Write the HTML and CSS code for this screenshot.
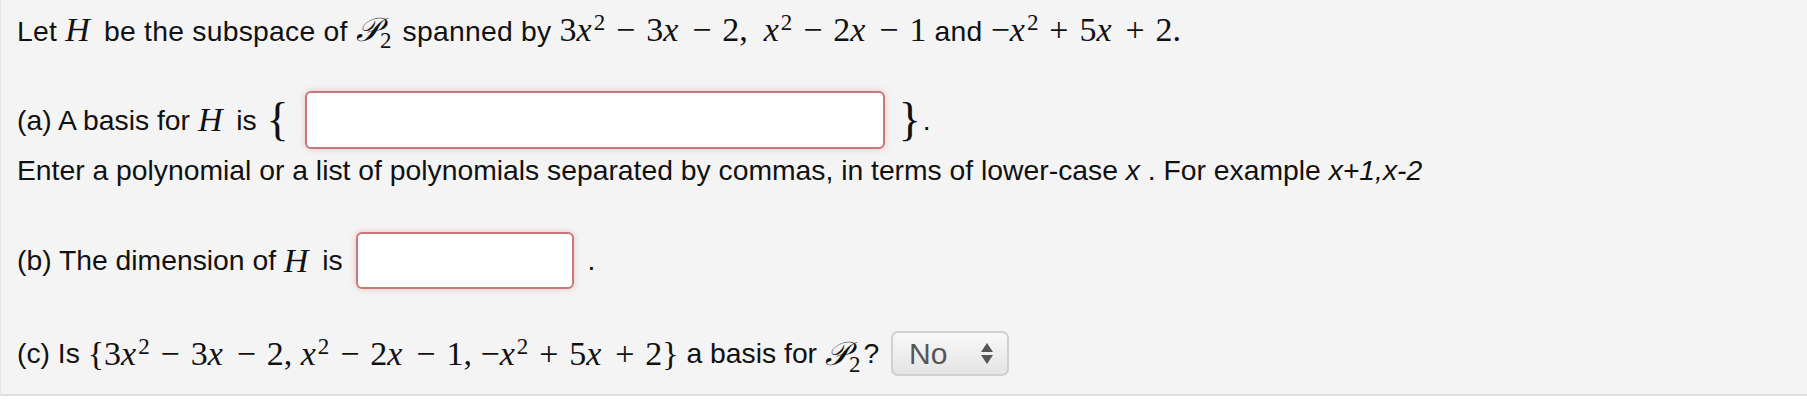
FILE: index.html
```html
<!DOCTYPE html>
<html>
<head>
<meta charset="utf-8">
<link rel="stylesheet" href="styles.css">
</head>
<body>
<div class="problem">
  <p class="line l1">Let <span class="m"><i class="mh">H</i></span> be the subspace of <span class="m"><span class="cal">𝒫</span><sub>2</sub></span> spanned by <span class="m">3<i>x</i><sup>2</sup><span class="op">−</span>3<i>x</i><span class="op">−</span>2,<span class="sp"></span><i>x</i><sup>2</sup><span class="op">−</span>2<i>x</i><span class="op">−</span>1</span> and <span class="m">−<i>x</i><sup>2</sup><span class="op">+</span>5<i>x</i><span class="op">+</span>2.</span></p>
  <div class="line la">(a) A basis for <span class="m"><i class="mh">H</i></span> is <span class="brace">{</span><span class="ans ans-a"></span><span class="brace rb">}</span><span class="dot">.</span></div>
  <p class="line lhint">Enter a polynomial or a list of polynomials separated by commas, in terms of lower-case <i>x</i> . For example <i>x+1,x-2</i></p>
  <div class="line lb">(b) The dimension of <span class="m"><i class="mh">H</i></span> is <span class="ans ans-b"></span> .</div>
  <div class="line lc">(c) Is <span class="m">{3<i>x</i><sup>2</sup><span class="op">−</span>3<i>x</i><span class="op">−</span>2, <i>x</i><sup>2</sup><span class="op">−</span>2<i>x</i><span class="op">−</span>1, −<i>x</i><sup>2</sup><span class="op">+</span>5<i>x</i><span class="op">+</span>2}</span> a basis for <span class="m"><span class="cal">𝒫</span><sub>2</sub></span>? <span class="sel">No<span class="arrows"><span class="up"></span><span class="dn"></span></span></span></div>
</div>
</body>
</html>
```
FILE: styles.css
```css
html, body {
  margin: 0;
  padding: 0;
  background: #ffffff;
}
.problem {
  background: #f4f4f4;
  border-left: 1px solid #e4e4e4;
  border-bottom: 2px solid #e0e0e0;
  height: 396px;
  box-sizing: border-box;
  padding: 0 0 0 16px;
  font-family: "Liberation Sans", Arial, sans-serif;
  font-size: 28.3px;
  color: #111;
}
.line {
  margin: 0;
  white-space: nowrap;
}
.l1 {
  padding-top: 12px;
  line-height: 36px;
  height: 36px;
  letter-spacing: 0.26px;
}
.la {
  margin-top: 43px;
  height: 58px;
  display: flex;
  align-items: center;
  white-space: pre;
}
.la .brace { margin-left: 2px; }
.la .ans-a { margin: 0 12px 0 16px; }
.dot { margin-left: 2px; }
.lhint {
  line-height: 34px;
  height: 34px;
  margin-top: 4px;
}
.lb {
  margin-top: 45px;
  display: flex;
  align-items: center;
  height: 57px;
  white-space: pre;
}
.lb .ans-b { margin: 0 6px 0 5px; }
.lc {
  margin-top: 42px;
  display: flex;
  align-items: center;
  height: 45px;
  white-space: pre;
}
.lc .sel { margin-left: 4px; }
.m {
  font-family: "Liberation Serif", "Times New Roman", serif;
  font-size: 34px;
  letter-spacing: 0;
}
.m i { font-style: italic; padding-right: 3px; }
.m i.mh { font-size: 34px; padding-right: 6px; }
.cal { font-family: "DejaVu Serif", "Liberation Serif", serif; font-style: italic; font-size: 33px; }
.m sub, .m sup { font-size: 23px; line-height: 0; }
.m sub { vertical-align: -7px; margin-right: 3px; }
.m sup { vertical-align: 11px; margin-left: -1px; }
.op {
  display: inline-block;
  width: 41px;
  text-align: center;
}
.sp { display: inline-block; width: 16px; }
.brace {
  font-family: "Liberation Serif", "Times New Roman", serif;
  font-size: 46px;
  line-height: 58px;
}
.ans {
  display: inline-block;
  background: #fff;
  border: 2px solid #c87878;
  border-radius: 6px;
  box-shadow: 0 0 6px rgba(205, 100, 100, 0.35);
  box-sizing: border-box;
}
.ans-a { width: 580px; height: 58px; }
.ans-b { width: 218px; height: 57px; }
.sel {
  display: inline-flex;
  align-items: center;
  justify-content: space-between;
  width: 118px;
  height: 45px;
  box-sizing: border-box;
  padding: 0 14px 0 16px;
  border: 2px solid #d0d0d0;
  border-radius: 7px;
  background: linear-gradient(#f8f8f8, #e4e4e4);
  color: #555;
  font-size: 30px;
}
.arrows {
  display: flex;
  flex-direction: column;
  gap: 3px;
}
.up, .dn {
  width: 0;
  height: 0;
  border-left: 6px solid transparent;
  border-right: 6px solid transparent;
}
.up { border-bottom: 9px solid #555; }
.dn { border-top: 9px solid #555; }
```
